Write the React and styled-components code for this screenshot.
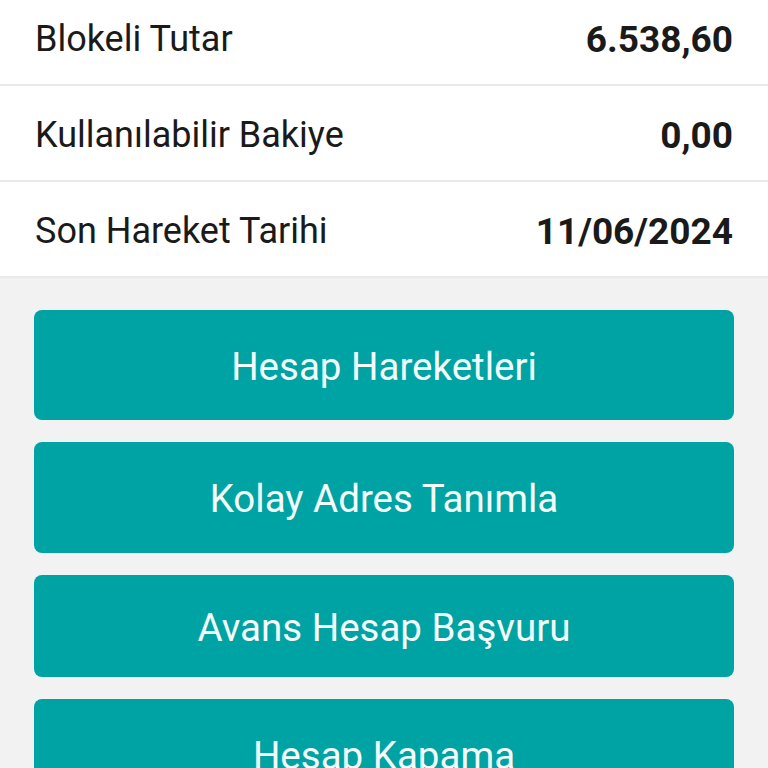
import React from 'react'
import styled, { createGlobalStyle } from 'styled-components'

const GlobalStyle = createGlobalStyle`
  html, body {
    margin: 0;
    padding: 0;
    background: #f2f2f2;
    font-family: Roboto, "Noto Sans", sans-serif;
  }
`

const Page = styled.div`
  width: 768px;
  height: 768px;
  overflow: hidden;
  background: #f2f2f2;
`

const InfoList = styled.div`
  margin-top: -10px;
  background: #fff;
`

const InfoRow = styled.div`
  box-sizing: border-box;
  display: flex;
  align-items: center;
  justify-content: space-between;
  height: 96px;
  padding: 4px 35px 0;
  border-bottom: 2px solid #e9e9e9;
`

const Label = styled.span`
  font-size: 36px;
  color: #1a1a1a;
`

const Value = styled.span`
  font-size: 37px;
  font-weight: 700;
  color: #1a1a1a;
`

const Actions = styled.div`
  display: flex;
  flex-direction: column;
  gap: 22px;
  padding: 32px 34px 0;
`

const ActionButton = styled.button`
  height: ${p => p.h}px;
  padding: 4px 0 0;
  border: none;
  border-radius: 8px;
  background: #00a3a3;
  color: #f4fbfb;
  font-family: Roboto, "Noto Sans", sans-serif;
  font-size: 38.5px;
  line-height: 1;
  flex-shrink: 0;
  cursor: pointer;
`

const rows = [
  { label: 'Blokeli Tutar', value: '6.538,60' },
  { label: 'Kullanılabilir Bakiye', value: '0,00' },
  { label: 'Son Hareket Tarihi', value: '11/06/2024' },
]

const buttons = [
  { text: 'Hesap Hareketleri', h: 110 },
  { text: 'Kolay Adres Tanımla', h: 111 },
  { text: 'Avans Hesap Başvuru', h: 102 },
  { text: 'Hesap Kapama', h: 110 },
]

function App() {
  return (
    <Page>
      <GlobalStyle />
      <InfoList>
        {rows.map(r => (
          <InfoRow key={r.label}>
            <Label>{r.label}</Label>
            <Value>{r.value}</Value>
          </InfoRow>
        ))}
      </InfoList>
      <Actions>
        {buttons.map(b => (
          <ActionButton key={b.text} h={b.h}>{b.text}</ActionButton>
        ))}
      </Actions>
    </Page>
  )
}

export default App
